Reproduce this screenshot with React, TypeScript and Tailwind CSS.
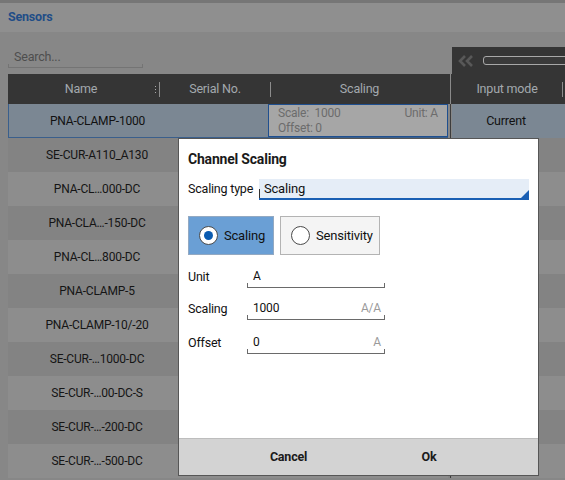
import type { ReactNode } from "react";

const rows = [
  "SE-CUR-A110_A130",
  "PNA-CL…000-DC",
  "PNA-CLA…-150-DC",
  "PNA-CL…800-DC",
  "PNA-CLAMP-5",
  "PNA-CLAMP-10/-20",
  "SE-CUR-…1000-DC",
  "SE-CUR-…00-DC-S",
  "SE-CUR-…-200-DC",
  "SE-CUR-…-500-DC",
];

function HeaderSep() {
  return <div className="w-px h-[15px] bg-[#8c8c8c]" />;
}

function Radio({ checked, label, className }: { checked: boolean; label: string; className: string }) {
  return (
    <div className={`h-[39px] flex items-center gap-[6px] px-[10px] border ${className}`}>
      <div className="w-[19px] h-[19px] shrink-0 rounded-full bg-white border border-[#4a4a4a] flex items-center justify-center">
        {checked && <div className="w-[9px] h-[9px] rounded-full bg-[#0a5bb0]" />}
      </div>
      <span className="text-[13px] text-[#111] whitespace-nowrap">{label}</span>
    </div>
  );
}

function Field({ label, value, unit, className }: { label: string; value: string; unit?: string; className: string }) {
  return (
    <div className={`flex items-start ${className}`}>
      <div className="w-[59px] h-[20px] flex items-center text-[12.5px] text-[#111]">{label}</div>
      <div className="w-[138px] flex flex-col">
        <div className="h-[16px] flex items-end justify-between pl-[6px] pr-[4px] text-[12px] leading-[14px]">
          <span className="text-[#111]">{value}</span>
          <span className="text-[#9a9a9a]">{unit ?? ""}</span>
        </div>
        <div className="h-[5px] border-x border-b border-[#6a6a6a]" />
      </div>
    </div>
  );
}

function Row({ i, children }: { i: number; children: ReactNode }) {
  return (
    <div className={`h-[34px] flex items-center ${i % 2 === 0 ? "bg-[#838383]" : "bg-[#8d8d8d]"}`}>
      {children}
    </div>
  );
}

export default function App() {
  return (
    <div className="w-[565px] h-[480px] relative overflow-hidden bg-[#878787] font-['Roboto',sans-serif] tracking-[-0.2px]">
      <div className="h-[3px] bg-[#767676]" />
      <div className="h-[29px] bg-[#8f8f8f] flex items-center px-[8px]">
        <span className="text-[12.5px] font-bold text-[#1f4d87]">Sensors</span>
      </div>

      <div className="flex">
        <div className="w-[8px] shrink-0" />

        {/* left table */}
        <div className="w-[440px] shrink-0 flex flex-col">
          <div className="mt-[18px] w-[135px] flex flex-col">
            <div className="h-[14px] flex items-end px-[6px] text-[12.5px] leading-[14px] text-[#4e4e4e]">Search...</div>
            <div className="h-[4px] border-x border-b border-[#747474]" />
          </div>
          <div className="mt-[6px] h-[30px] bg-[#353535] flex items-center text-[12.5px] text-[#a3a9ae]">
            <div className="w-[146px] text-center">Name</div>
            <div className="w-[3px] flex flex-col gap-[2px] items-center mr-[2px]">
              <div className="w-px h-[1px] bg-[#aaa]" />
              <div className="w-px h-[1px] bg-[#aaa]" />
              <div className="w-px h-[1px] bg-[#aaa]" />
            </div>
            <HeaderSep />
            <div className="w-[110px] text-center">Serial No.</div>
            <HeaderSep />
            <div className="flex-1 text-center">Scaling</div>
          </div>
          <div className="h-[34px] flex bg-[#7b8793] border-l border-b border-[#3a5f8c]">
            <div className="w-[177px] flex items-center justify-center text-[12px] text-[#111]">PNA-CLAMP-1000</div>
            <div className="w-[82px]" />
            <div className="flex-1 bg-[#a6a6a6] border border-[#1f4f8f] px-[9px] pt-[1px] text-[12px] leading-[15px] text-[#6c6c6c]">
              <div className="flex justify-between">
                <span>Scale:&nbsp; 1000</span>
                <span>Unit: A</span>
              </div>
              <div>Offset: 0</div>
            </div>
          </div>
          {rows.map((r, i) => (
            <Row key={r} i={i}>
              <div className="w-[178px] text-center text-[12px] text-[#151515]">{r}</div>
            </Row>
          ))}
        </div>

        {/* gap */}
        <div className="w-[4px] shrink-0 flex flex-col">
          <div className="h-[42px]" />
          <div className="h-[30px] bg-[#353535] flex justify-center">
            <div className="w-px h-full bg-[#8a8a8a]" />
          </div>
          <div className="flex-1 flex justify-center">
            <div className="w-px h-full bg-[#3c3c3c]" />
          </div>
        </div>

        {/* right panel */}
        <div className="flex-1 flex flex-col">
          <div className="mt-[15px] h-[27px] bg-[#353535] flex items-center pl-[6px] gap-[9px]">
            <svg width="16" height="12" viewBox="0 0 16 12" className="shrink-0">
              <path d="M7 1 L2 6 L7 11" stroke="#585858" strokeWidth="2.6" fill="none" />
              <path d="M14 1 L9 6 L14 11" stroke="#585858" strokeWidth="2.6" fill="none" />
            </svg>
            <div className="flex-1 h-[9px] -mr-[8px] rounded-[3px] border border-[#a8a8a8] bg-[#3a3a3a]" />
          </div>
          <div className="h-[30px] bg-[#353535] flex items-center text-[12.5px] text-[#a3a9ae]">
            <div className="w-[110px] text-center">Input mode</div>
            <HeaderSep />
          </div>
          <div className="h-[34px] bg-[#7b8793] flex items-center">
            <div className="w-[108px] text-center text-[12.5px] text-[#111]">Current</div>
          </div>
          {rows.map((r, i) => (
            <Row key={r} i={i}>
              <span />
            </Row>
          ))}
        </div>
      </div>

      {/* dialog */}
      <div className="absolute left-[178px] top-[138px] w-[361px] h-[338px] bg-white border border-[#565656] flex flex-col">
        <div className="flex-1 px-[9px] flex flex-col">
          <div className="mt-[11px] h-[18px] leading-[18px] text-[14px] font-bold text-[#1a1a1a]">Channel Scaling</div>
          <div className="mt-[11px] flex items-center">
            <div className="w-[71px] text-[12.5px] text-[#111]">Scaling type</div>
            <div className="flex-1 h-[21px] bg-[#e5edf7] border-b-2 border-[#1a5fb4] flex items-end relative">
              <div className="w-px h-[9px] bg-[#333]" />
              <span className="pl-[4px] self-center text-[13px] text-[#111]">Scaling</span>
              <svg width="8" height="8" viewBox="0 0 8 8" className="absolute right-0 bottom-0">
                <path d="M8 0 L8 8 L0 8 Z" fill="#1a5fb4" />
              </svg>
            </div>
          </div>
          <div className="mt-[16px] flex gap-[6px]">
            <Radio checked label="Scaling" className="w-[86px] bg-[#6a9fd5] border-[#93a9c2]" />
            <Radio checked={false} label="Sensitivity" className="w-[100px] bg-[#f4f4f4] border-[#b3b3b3]" />
          </div>
          <Field label="Unit" value="A" className="mt-[12px]" />
          <Field label="Scaling" value="1000" unit="A/A" className="mt-[11px]" />
          <Field label="Offset" value="0" unit="A" className="mt-[13px]" />
        </div>
        <div className="h-[37px] bg-[#d3d3d3] border-t border-[#bdbdbd] flex items-center text-[12.5px] font-bold text-[#1a1a1a]">
          <div className="w-[219px] text-center">Cancel</div>
          <div className="w-[62px] text-center">Ok</div>
        </div>
      </div>
    </div>
  );
}
